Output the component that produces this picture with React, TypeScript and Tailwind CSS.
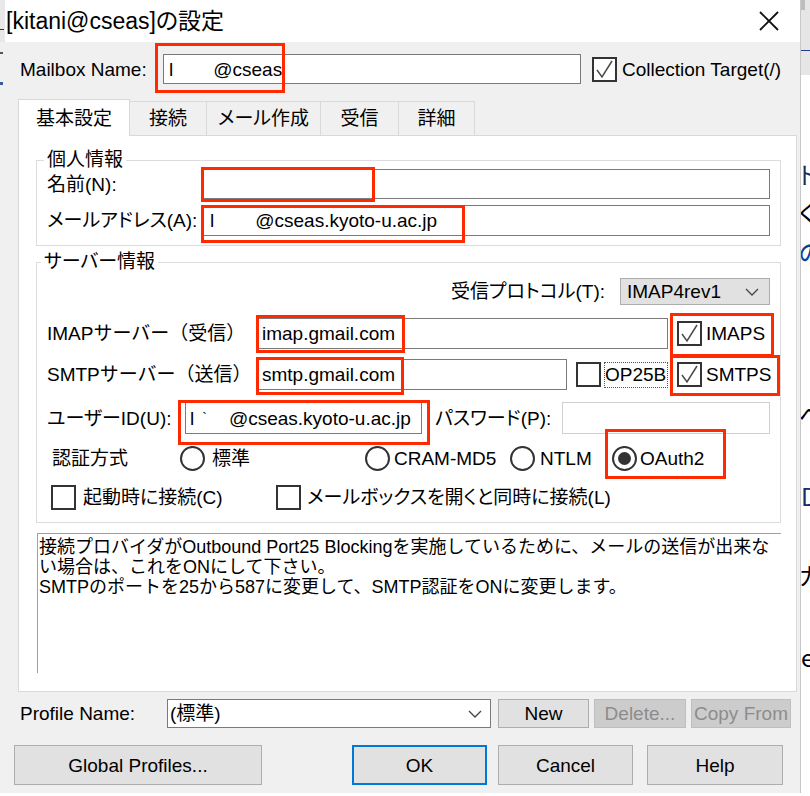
import React from "react";

const F = "font-['Liberation_Sans','Noto_Sans_CJK_JP',sans-serif] [font-feature-settings:'palt']";

function Check({ checked }: { checked?: boolean }) {
  return (
    <div className="w-[25px] h-[25px] border-2 border-[#333] bg-white flex items-center justify-center shrink-0">
      {checked && (
        <svg width="21" height="21" viewBox="0 0 21 21">
          <polyline points="3,11 8,18 18,2" fill="none" stroke="#4a4a4a" strokeWidth="1.5" />
        </svg>
      )}
    </div>
  );
}

function Radio({ on }: { on?: boolean }) {
  return (
    <div className="w-[25px] h-[25px] rounded-full border-2 border-[#333] bg-white flex items-center justify-center shrink-0">
      {on && <div className="w-[13px] h-[13px] rounded-full bg-[#333]" />}
    </div>
  );
}

function Chevron() {
  return (
    <svg width="14" height="8" viewBox="0 0 14 8">
      <polyline points="1,1 7,7 13,1" fill="none" stroke="#444" strokeWidth="1.3" />
    </svg>
  );
}

function Red({ x, y, w, h }: { x: number; y: number; w: number; h: number }) {
  return (
    <div
      className="absolute border-[3px] border-[#ff2a00] pointer-events-none"
      style={{ left: x, top: y, width: w, height: h }}
    />
  );
}

export default function App() {
  return (
    <div className={`relative w-[810px] h-[796px] bg-white overflow-hidden flex text-black ${F}`}>
      {/* left sliver of background window */}
      <div className="w-[5px] h-[793px] flex flex-col shrink-0">
        <div className="h-[42px] bg-[#e8e8e8] flex flex-col">
          <div className="mt-[29px] h-[1px] w-[4px] bg-[#333]" />
        </div>
        <div className="flex-1 bg-[#f0f0f0] flex flex-col">
          <div className="mt-[10px] h-[2px] w-[3px] bg-[#555]" />
          <div className="mt-[28px] h-[3px] w-[3px] bg-[#3a5ba0]" />
        </div>
      </div>

      {/* dialog */}
      <div className="w-[796px] h-[793px] flex flex-col shrink-0 border-r border-[#c8c8c8]">
        {/* title bar */}
        <div className="h-[42px] bg-white flex items-center shrink-0">
          <div className="ml-[1px] text-[23px] leading-none whitespace-nowrap">[kitani@cseas]の設定</div>
          <div className="ml-auto mr-[20px] w-[22px] h-[22px] flex items-center justify-center">
            <svg width="22" height="22" viewBox="0 0 22 22">
              <line x1="2" y1="2" x2="20" y2="20" stroke="#111" strokeWidth="1.8" />
              <line x1="20" y1="2" x2="2" y2="20" stroke="#111" strokeWidth="1.8" />
            </svg>
          </div>
        </div>

        {/* body */}
        <div className="flex-1 bg-[#f0f0f0] flex flex-col text-[19px] leading-none">
          {/* mailbox row */}
          <div className="mt-[12px] h-[30px] flex items-center">
            <div className="ml-[15px] w-[143px] whitespace-nowrap">Mailbox Name:</div>
            <div className="h-[30px] w-[418px] bg-white border border-[#7a7a7a] flex items-center pl-[5px] whitespace-nowrap">
              <span>l</span>
              <span className="ml-[40px]">@cseas</span>
            </div>
            <div className="ml-[11px]">
              <Check checked />
            </div>
            <div className="ml-[5px] whitespace-nowrap">Collection Target(/)</div>
          </div>

          {/* tabs */}
          <div className="mt-[15px] ml-[13px] h-[36px] flex items-end">
            <div className="h-[37px] w-[112px] bg-white border border-b-0 border-[#d9d9d9] flex items-center justify-center relative z-10 -mb-px">
              基本設定
            </div>
            <div className="h-[34px] w-[77px] border-t border-r border-[#d9d9d9] flex items-center justify-center">接続</div>
            <div className="h-[34px] w-[114px] border-t border-r border-[#d9d9d9] flex items-center justify-center">メール作成</div>
            <div className="h-[34px] w-[78px] border-t border-r border-[#d9d9d9] flex items-center justify-center">受信</div>
            <div className="h-[34px] w-[76px] border-t border-r border-[#d9d9d9] flex items-center justify-center">詳細</div>
          </div>

          {/* panel */}
          <div className="ml-[13px] w-[779px] h-[557px] bg-white border border-[#d9d9d9] flex flex-col">
            {/* 個人情報 */}
            <fieldset className="ml-[17px] mt-[16px] w-[745px] border border-[#dcdcdc] pb-[9px]">
              <legend className="ml-[7px] px-[3px] leading-[16px]">個人情報</legend>
              <div className="mt-[1px] h-[30px] flex items-center pl-[10px] pr-[10px]">
                <div className="w-[156px] whitespace-nowrap">名前(N):</div>
                <div className="flex-1 h-[30px] bg-white border border-[#7a7a7a]" />
              </div>
              <div className="mt-[6px] h-[31px] flex items-center pl-[10px] pr-[10px]">
                <div className="w-[156px] whitespace-nowrap">メールアドレス(A):</div>
                <div className="flex-1 h-[31px] bg-white border border-[#7a7a7a] flex items-center pl-[6px] whitespace-nowrap">
                  <span>l</span>
                  <span className="ml-[41px]">@cseas.kyoto-u.ac.jp</span>
                </div>
              </div>
            </fieldset>

            {/* サーバー情報 */}
            <fieldset className="ml-[17px] mt-[8px] w-[745px] border border-[#dcdcdc] pb-[12px]">
              <legend className="ml-[4px] px-[3px] leading-[16px]">サーバー情報</legend>
              <div className="mt-[8px] h-[27px] flex items-center justify-end pr-[10px]">
                <div className="whitespace-nowrap">受信プロトコル(T):</div>
                <div className="ml-[15px] w-[150px] h-[27px] bg-[#e1e1e1] border border-[#adadad] flex items-center pl-[6px] pr-[10px]">
                  <span>IMAP4rev1</span>
                  <span className="ml-auto flex">
                    <Chevron />
                  </span>
                </div>
              </div>

              <div className="mt-[13px] h-[31px] flex items-center pl-[10px]">
                <div className="w-[211px] whitespace-nowrap [font-feature-settings:normal]">IMAPサーバー（受信）</div>
                <div className="w-[410px] h-[31px] bg-white border border-[#7a7a7a] flex items-center pl-[3px]">imap.gmail.com</div>
                <div className="ml-[9px]">
                  <Check checked />
                </div>
                <div className="ml-[4px]">IMAPS</div>
              </div>

              <div className="mt-[10px] h-[31px] flex items-center pl-[10px]">
                <div className="w-[211px] whitespace-nowrap [font-feature-settings:normal]">SMTPサーバー（送信）</div>
                <div className="w-[309px] h-[31px] bg-white border border-[#7a7a7a] flex items-center pl-[3px]">smtp.gmail.com</div>
                <div className="ml-[9px]">
                  <Check />
                </div>
                <div className="ml-[3px] w-[64px] h-[26px] border border-dotted border-[#555] flex items-center">OP25B</div>
                <div className="ml-[9px]">
                  <Check checked />
                </div>
                <div className="ml-[4px]">SMTPS</div>
              </div>

              <div className="mt-[12px] h-[32px] flex items-center pl-[10px]">
                <div className="w-[138px] whitespace-nowrap">ユーザーID(U):</div>
                <div className="w-[237px] h-[32px] bg-white border border-[#7a7a7a] flex items-center pl-[4px] whitespace-nowrap">
                  <span>l</span>
                  <span className="ml-[8px] text-[14px]">`</span>
                  <span className="ml-[22px]">@cseas.kyoto-u.ac.jp</span>
                </div>
                <div className="ml-[13px] w-[127px] whitespace-nowrap">パスワード(P):</div>
                <div className="w-[208px] h-[32px] bg-white border border-[#d0d0d0]" />
              </div>

              <div className="mt-[11px] h-[26px] flex items-center pl-[15px]">
                <div className="w-[128px] whitespace-nowrap">認証方式</div>
                <div className="w-[185px] flex items-center">
                  <Radio />
                  <span className="ml-[7px]">標準</span>
                </div>
                <div className="w-[145px] flex items-center">
                  <Radio />
                  <span className="ml-[4px]">CRAM-MD5</span>
                </div>
                <div className="w-[102px] flex items-center">
                  <Radio />
                  <span className="ml-[5px]">NTLM</span>
                </div>
                <div className="flex items-center">
                  <Radio on />
                  <span className="ml-[3px]">OAuth2</span>
                </div>
              </div>

              <div className="mt-[13px] h-[26px] flex items-center pl-[14px]">
                <div className="w-[225px] flex items-center">
                  <Check />
                  <span className="ml-[7px] whitespace-nowrap">起動時に接続(C)</span>
                </div>
                <div className="flex items-center">
                  <Check />
                  <span className="ml-[6px] whitespace-nowrap">メールボックスを開くと同時に接続(L)</span>
                </div>
              </div>
            </fieldset>

            {/* description */}
            <div className="ml-[18px] mt-[10px] w-[744px] h-[140px] border-t border-l border-[#a0a0a0] pt-[3px] pl-[1px] text-[18px] leading-[20px] overflow-hidden [font-feature-settings:normal]">
              <div className="whitespace-nowrap h-[20px]">接続プロバイダがOutbound Port25 Blockingを実施しているために、メールの送信が出来な</div>
              <div className="whitespace-nowrap h-[20px]">い場合は、これをONにして下さい。</div>
              <div className="whitespace-nowrap h-[20px]">SMTPのポートを25から587に変更して、SMTP認証をONに変更します。</div>
            </div>
          </div>

          {/* profile row */}
          <div className="mt-[7px] h-[29px] flex items-center">
            <div className="ml-[15px] w-[147px] whitespace-nowrap">Profile Name:</div>
            <div className="w-[324px] h-[29px] bg-white border border-[#7a7a7a] flex items-center pl-[2px] pr-[8px]">
              <span>(標準)</span>
              <span className="ml-auto flex">
                <Chevron />
              </span>
            </div>
            <div className="ml-[7px] w-[91px] h-[29px] bg-[#e1e1e1] border border-[#adadad] flex items-center justify-center whitespace-nowrap">New</div>
            <div className="ml-[5px] w-[92px] h-[29px] bg-[#cccccc] border border-[#bfbfbf] text-[#8c8c8c] flex items-center justify-center whitespace-nowrap">Delete...</div>
            <div className="ml-[5px] w-[100px] h-[29px] bg-[#cccccc] border border-[#bfbfbf] text-[#8c8c8c] flex items-center justify-center whitespace-nowrap">Copy From</div>
          </div>

          {/* bottom buttons */}
          <div className="mt-[17px] h-[40px] flex items-center">
            <div className="ml-[9px] w-[248px] h-[40px] bg-[#e1e1e1] border border-[#adadad] flex items-center justify-center">Global Profiles...</div>
            <div className="ml-[90px] w-[135px] h-[40px] bg-[#e1e1e1] border-2 border-[#0078d7] flex items-center justify-center">OK</div>
            <div className="ml-[11px] w-[135px] h-[40px] bg-[#e1e1e1] border border-[#adadad] flex items-center justify-center">Cancel</div>
            <div className="ml-[14px] w-[136px] h-[40px] bg-[#e1e1e1] border border-[#adadad] flex items-center justify-center">Help</div>
          </div>
        </div>
      </div>

      {/* right sliver of background window */}
      <div className="flex-1 h-[796px] overflow-hidden flex flex-col text-[24px] leading-none font-['Noto_Sans_CJK_JP',sans-serif]">
        <div className="h-[75px] bg-[#e6e6e6] flex flex-col shrink-0">
          <div className="h-[10px] w-[4px] bg-[#bdbdbd]" />
          <div className="mt-[40px] h-[1px] bg-[#1f3f8f]" />
        </div>
        <div className="mt-[87px] -ml-[2px] whitespace-nowrap text-[#1a2a55]">ト</div>
        <div className="mt-[14px] -ml-[2px] whitespace-nowrap">く</div>
        <div className="mt-[16px] -ml-[2px] whitespace-nowrap text-[#0d3f9a]">の</div>
        <div className="mt-[138px] -ml-[2px] whitespace-nowrap">ぺ</div>
        <div className="mt-[58px] ml-0 whitespace-nowrap text-[#1a2a6a]">D</div>
        <div className="mt-[55px] -ml-[2px] whitespace-nowrap">ガ</div>
        <div className="mt-[58px] ml-0 whitespace-nowrap">e</div>
      </div>

      {/* red annotation boxes */}
      <Red x={155} y={43} w={130} h={50} />
      <Red x={201} y={167} w={174} h={35} />
      <Red x={201} y={205} w={264} h={38} />
      <Red x={256} y={315} w={149} h={38} />
      <Red x={670} y={313} w={104} h={44} />
      <Red x={256} y={357} w={148} h={38} />
      <Red x={670} y={355} w={110} h={41} />
      <Red x={178} y={400} w={252} h={45} />
      <Red x={605} y={429} w={121} h={50} />
    </div>
  );
}
